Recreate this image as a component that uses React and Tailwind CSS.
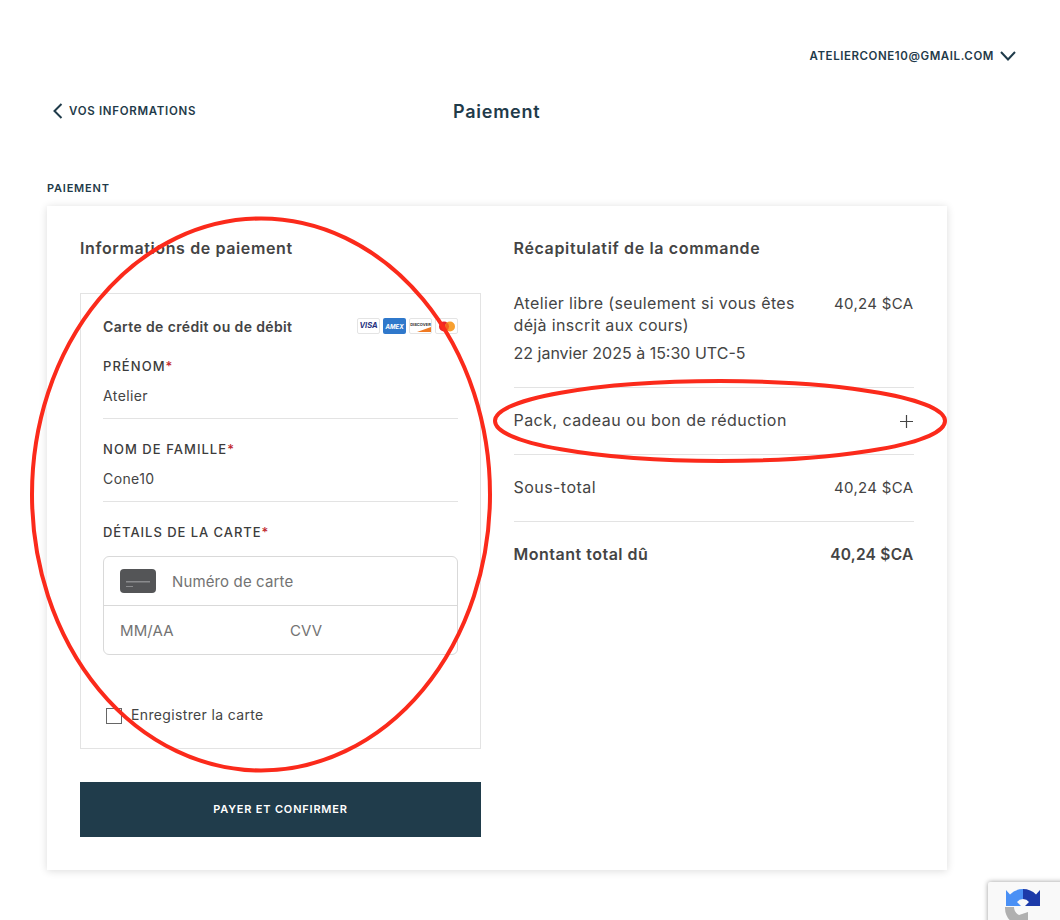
const ink = "text-[#1f3b4a]";

function Row({ label, value, bold }) {
  return (
    <div className={`flex justify-between items-center h-[66px] ${bold ? "font-semibold" : ""}`}>
      <span className={`text-[16px] relative top-[-1px] ${bold ? "tracking-[0.5px]" : "tracking-[0.45px]"}`}>{label}</span>
      <span className={bold ? "text-[15.5px] tracking-[0.25px]" : "text-[15px] tracking-[0.33px]"}>{value}</span>
    </div>
  );
}

function Field({ label, value }) {
  return (
    <div className="mb-[20px]">
      <div className="text-[13px] leading-[20px] font-medium tracking-[1.05px] text-[#3c3c3c]">
        {label}
        <span className="text-[#c0272d]">*</span>
      </div>
      <div className="h-[43px] pt-[10px] text-[14px] tracking-[0.4px] leading-[20px] border-b border-[#e3e3e3]">{value}</div>
    </div>
  );
}

function CardLogos() {
  return (
    <div className="flex gap-[3px]">
      <span className="w-[23px] h-[16px] border border-[#e4e4e4] rounded-[2px] flex items-center justify-center text-[7.5px] font-bold italic text-[#27327f]">VISA</span>
      <span className="w-[23px] h-[16px] rounded-[2px] bg-[#2f78cb] flex items-center justify-center text-[6px] font-bold italic text-white">AMEX</span>
      <span className="relative w-[23px] h-[16px] border border-[#e4e4e4] rounded-[2px] flex justify-center pt-[3px] leading-[6px] text-[4px] font-bold text-[#333]">
        DISCOVER
        <svg className="absolute right-0 bottom-[1px]" width="14" height="5" viewBox="0 0 14 5">
          <path d="M0 5L14 0v5z" fill="#f07a22" />
        </svg>
      </span>
      <span className="w-[23px] h-[16px] border border-[#e4e4e4] rounded-[2px] flex items-center justify-center">
        <svg width="18" height="11" viewBox="0 0 18 11">
          <circle cx="6" cy="5.5" r="5" fill="#e8262c" />
          <circle cx="12" cy="5.5" r="5" fill="#f7a030" />
          <path d="M9 1.5a5 5 0 0 1 0 8a5 5 0 0 1 0-8z" fill="#f2641f" />
        </svg>
      </span>
    </div>
  );
}

export default function App() {
  return (
    <div
      className="relative w-[1060px] h-[920px] overflow-hidden bg-white text-[#444444]"
      style={{ fontFamily: "Inter, 'Liberation Sans', sans-serif" }}
    >
      <div className={`h-[18px] mt-[47px] pr-[44px] flex justify-end items-center gap-[6px] ${ink}`}>
        <span className="text-[11.5px] font-semibold tracking-[0.57px] leading-[18px]">ATELIERCONE10@GMAIL.COM</span>
        <svg width="16" height="10" viewBox="0 0 16 10" fill="none" stroke="currentColor" strokeWidth="2">
          <path d="M1 1l7 7.5L15 1" />
        </svg>
      </div>

      <div className="relative h-[40px] mt-[26px] flex items-center pl-[53px]">
        <div className={`flex items-center gap-[6px] ${ink}`}>
          <svg width="10" height="16" viewBox="0 0 10 16" fill="none" stroke="currentColor" strokeWidth="2">
            <path d="M8.5 1L1.5 8l7 7" />
          </svg>
          <span className="text-[11.5px] font-semibold tracking-[0.7px] relative top-[1px]">VOS INFORMATIONS</span>
        </div>
        <span className={`absolute left-[453px] text-[18px] tracking-[0.75px] font-semibold ${ink}`}>Paiement</span>
      </div>

      <div className={`ml-[47px] mt-[49px] h-[16px] leading-[16px] text-[11px] font-semibold tracking-[0.8px] ${ink}`}>PAIEMENT</div>

      <div className="ml-[47px] mt-[10px] w-[900px] h-[664px] bg-white shadow-[0_1px_8px_rgba(0,0,0,0.14)] p-[33px] flex gap-[33px]">
        <div className="w-[401px]">
          <h2 className="text-[16px] tracking-[0.62px] leading-[20px] font-semibold -mt-[1px]">Informations de paiement</h2>
          <div className="mt-[35px] h-[456px] border border-[#e3e3e3] px-[22px] pt-[22px]">
            <div className="flex justify-between items-center h-[20px] mb-[20px]">
              <span className="text-[14px] tracking-[0.37px] font-semibold">Carte de crédit ou de débit</span>
              <CardLogos />
            </div>
            <Field label="PRÉNOM" value="Atelier" />
            <Field label="NOM DE FAMILLE" value="Cone10" />
            <div className="text-[13px] leading-[20px] font-medium tracking-[0.95px] text-[#3c3c3c]">
              DÉTAILS DE LA CARTE<span className="text-[#c0272d]">*</span>
            </div>
            <div className="mt-[14px] h-[99px] border border-[#d9d9d9] rounded-[6px] text-[15px] tracking-[0.13px] text-[#737373]">
              <div className="h-[49px] border-b border-[#d9d9d9] flex items-center pl-[16px] gap-[16px]">
                <svg width="36" height="24" viewBox="0 0 36 24">
                  <rect width="36" height="24" rx="4" fill="#545557" />
                  <rect x="6" y="12" width="24" height="1.5" fill="#8a8b8d" />
                  <rect x="6" y="17" width="7" height="1" fill="#8a8b8d" />
                </svg>
                <span className="pt-[2px]">Numéro de carte</span>
              </div>
              <div className="h-[49px] flex items-center pl-[16px]">
                <span className="w-[170px] pt-[2px]">MM/AA</span>
                <span className="pt-[2px]">CVV</span>
              </div>
            </div>
            <div className="mt-[50px] ml-[3px] flex items-center gap-[9px] text-[14px] tracking-[0.35px]">
              <span className="w-[16px] h-[16px] border border-[#666]" />
              <span className="relative top-[-1px]">Enregistrer la carte</span>
            </div>
          </div>
          <button className="mt-[33px] w-[401px] h-[55px] bg-[#203c4b] text-white text-[11px] font-semibold tracking-[0.8px]">
            PAYER ET CONFIRMER
          </button>
        </div>

        <div className="w-[400px] -ml-[0.5px]">
          <h2 className="text-[16px] tracking-[0.65px] leading-[20px] font-semibold -mt-[1px]">Récapitulatif de la commande</h2>
          <div className="mt-[34px] h-[96px] border-b border-[#e3e3e3] leading-[22px]">
            <div className="flex justify-between">
              <span className="w-[300px] text-[16px] tracking-[0.35px]">Atelier libre (seulement si vous êtes déjà inscrit aux cours)</span>
              <span className="text-[15px] tracking-[0.33px] relative top-[1px]">40,24 $CA</span>
            </div>
            <div className="mt-[6px] text-[16px]">22 janvier 2025 à 15:30 UTC-5</div>
          </div>
          <div className="border-b border-[#e3e3e3]">
            <div className="flex justify-between items-center h-[66px] text-[16px] tracking-[0.45px]">
              <span className="relative top-[-1px]">Pack, cadeau ou bon de réduction</span>
              <svg className="mr-[1px]" width="13" height="13" viewBox="0 0 13 13" stroke="#444" strokeWidth="1.2">
                <path d="M6.5 0v13M0 6.5h13" />
              </svg>
            </div>
          </div>
          <div className="border-b border-[#e3e3e3]">
            <Row label="Sous-total" value="40,24 $CA" />
          </div>
          <Row label="Montant total dû" value="40,24 $CA" bold />
        </div>
      </div>

      <div className="absolute left-[988px] top-[882px] w-[80px] h-[60px] bg-[#f9f9f9] shadow-[0_0_5px_rgba(0,0,0,0.4)] rounded-[2px] pt-[6px] pl-[16px]">
        <svg width="38" height="38" viewBox="0 0 38 38">
          <path d="M19 1a18 18 0 0 0-13 5.500L2 2v16h15l-4-4a8 8 0 0 1 6-3z" fill="#4a90f5" />
          <path d="M19 1a18 18 0 0 1 13 5.500L36 2v16H21l4-4a8 8 0 0 0-6-3z" fill="#1c3aa9" />
          <path d="M1 19h9a9 9 0 0 0 5 8l9-3v14H19a18 18 0 0 1-18-18z" fill="#b0b0b0" />
        </svg>
      </div>

      <svg className="absolute inset-0 pointer-events-none" width="1060" height="920" fill="none" stroke="#fb2a1b" strokeWidth="4">
        <ellipse cx="261" cy="494.5" rx="229" ry="276" />
        <ellipse cx="720" cy="421" rx="225" ry="40" />
      </svg>
    </div>
  );
}
